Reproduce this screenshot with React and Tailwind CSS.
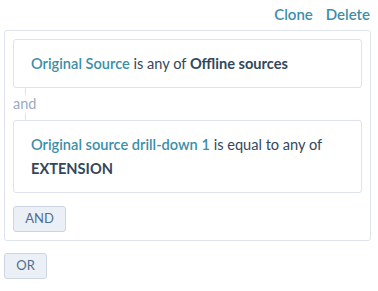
export default function App() {
  const font = { fontFamily: 'Lato, "Open Sans", sans-serif' };
  return (
    <div className="w-[378px] h-[291px] bg-white pl-[4px] pr-[7px] text-[14.6px] text-[#33475b]" style={font}>
      <div className="flex justify-end gap-[13px] h-[30px] items-center pb-[2px] pr-[1px] text-[15px] font-semibold text-[#3b8fa8]">
        <span>Clone</span>
        <span>Delete</span>
      </div>
      <div className="border border-[#dfe3eb] rounded-[3px] p-[8px]">
        <div className="border border-[#dfe3eb] rounded-[3px] h-[49px] flex items-center pl-[17px]">
          <p>
            <span className="font-semibold text-[#3b8fa8]">Original Source</span> is any of{' '}
            <span className="font-bold">Offline sources</span>
          </p>
        </div>
        <div className="relative h-[32px]">
          <div className="absolute left-[12px] top-0 bottom-0 border-l border-[#dfe3eb]" />
          <span className="absolute left-0 top-[7px] bg-white text-[#99acc2] text-[14.5px] leading-[18px]">and</span>
        </div>
        <div className="border border-[#dfe3eb] rounded-[3px] h-[73px] flex items-center pl-[17px] pr-[10px]">
          <p className="leading-[24px]">
            <span className="font-semibold text-[#3b8fa8]">Original source drill-down 1</span> is equal to any of
            <br />
            <span className="font-bold">EXTENSION</span>
          </p>
        </div>
        <button className="mt-[13px] h-[26px] w-[53px] rounded-[3px] border border-[#cbd6e2] bg-[#eaf0f6] text-[13px] text-[#506e91] flex items-center justify-center">
          AND
        </button>
      </div>
      <button className="mt-[12px] h-[26px] w-[43px] rounded-[3px] border border-[#cbd6e2] bg-[#eaf0f6] text-[13px] text-[#506e91] flex items-center justify-center">
        OR
      </button>
    </div>
  );
}
